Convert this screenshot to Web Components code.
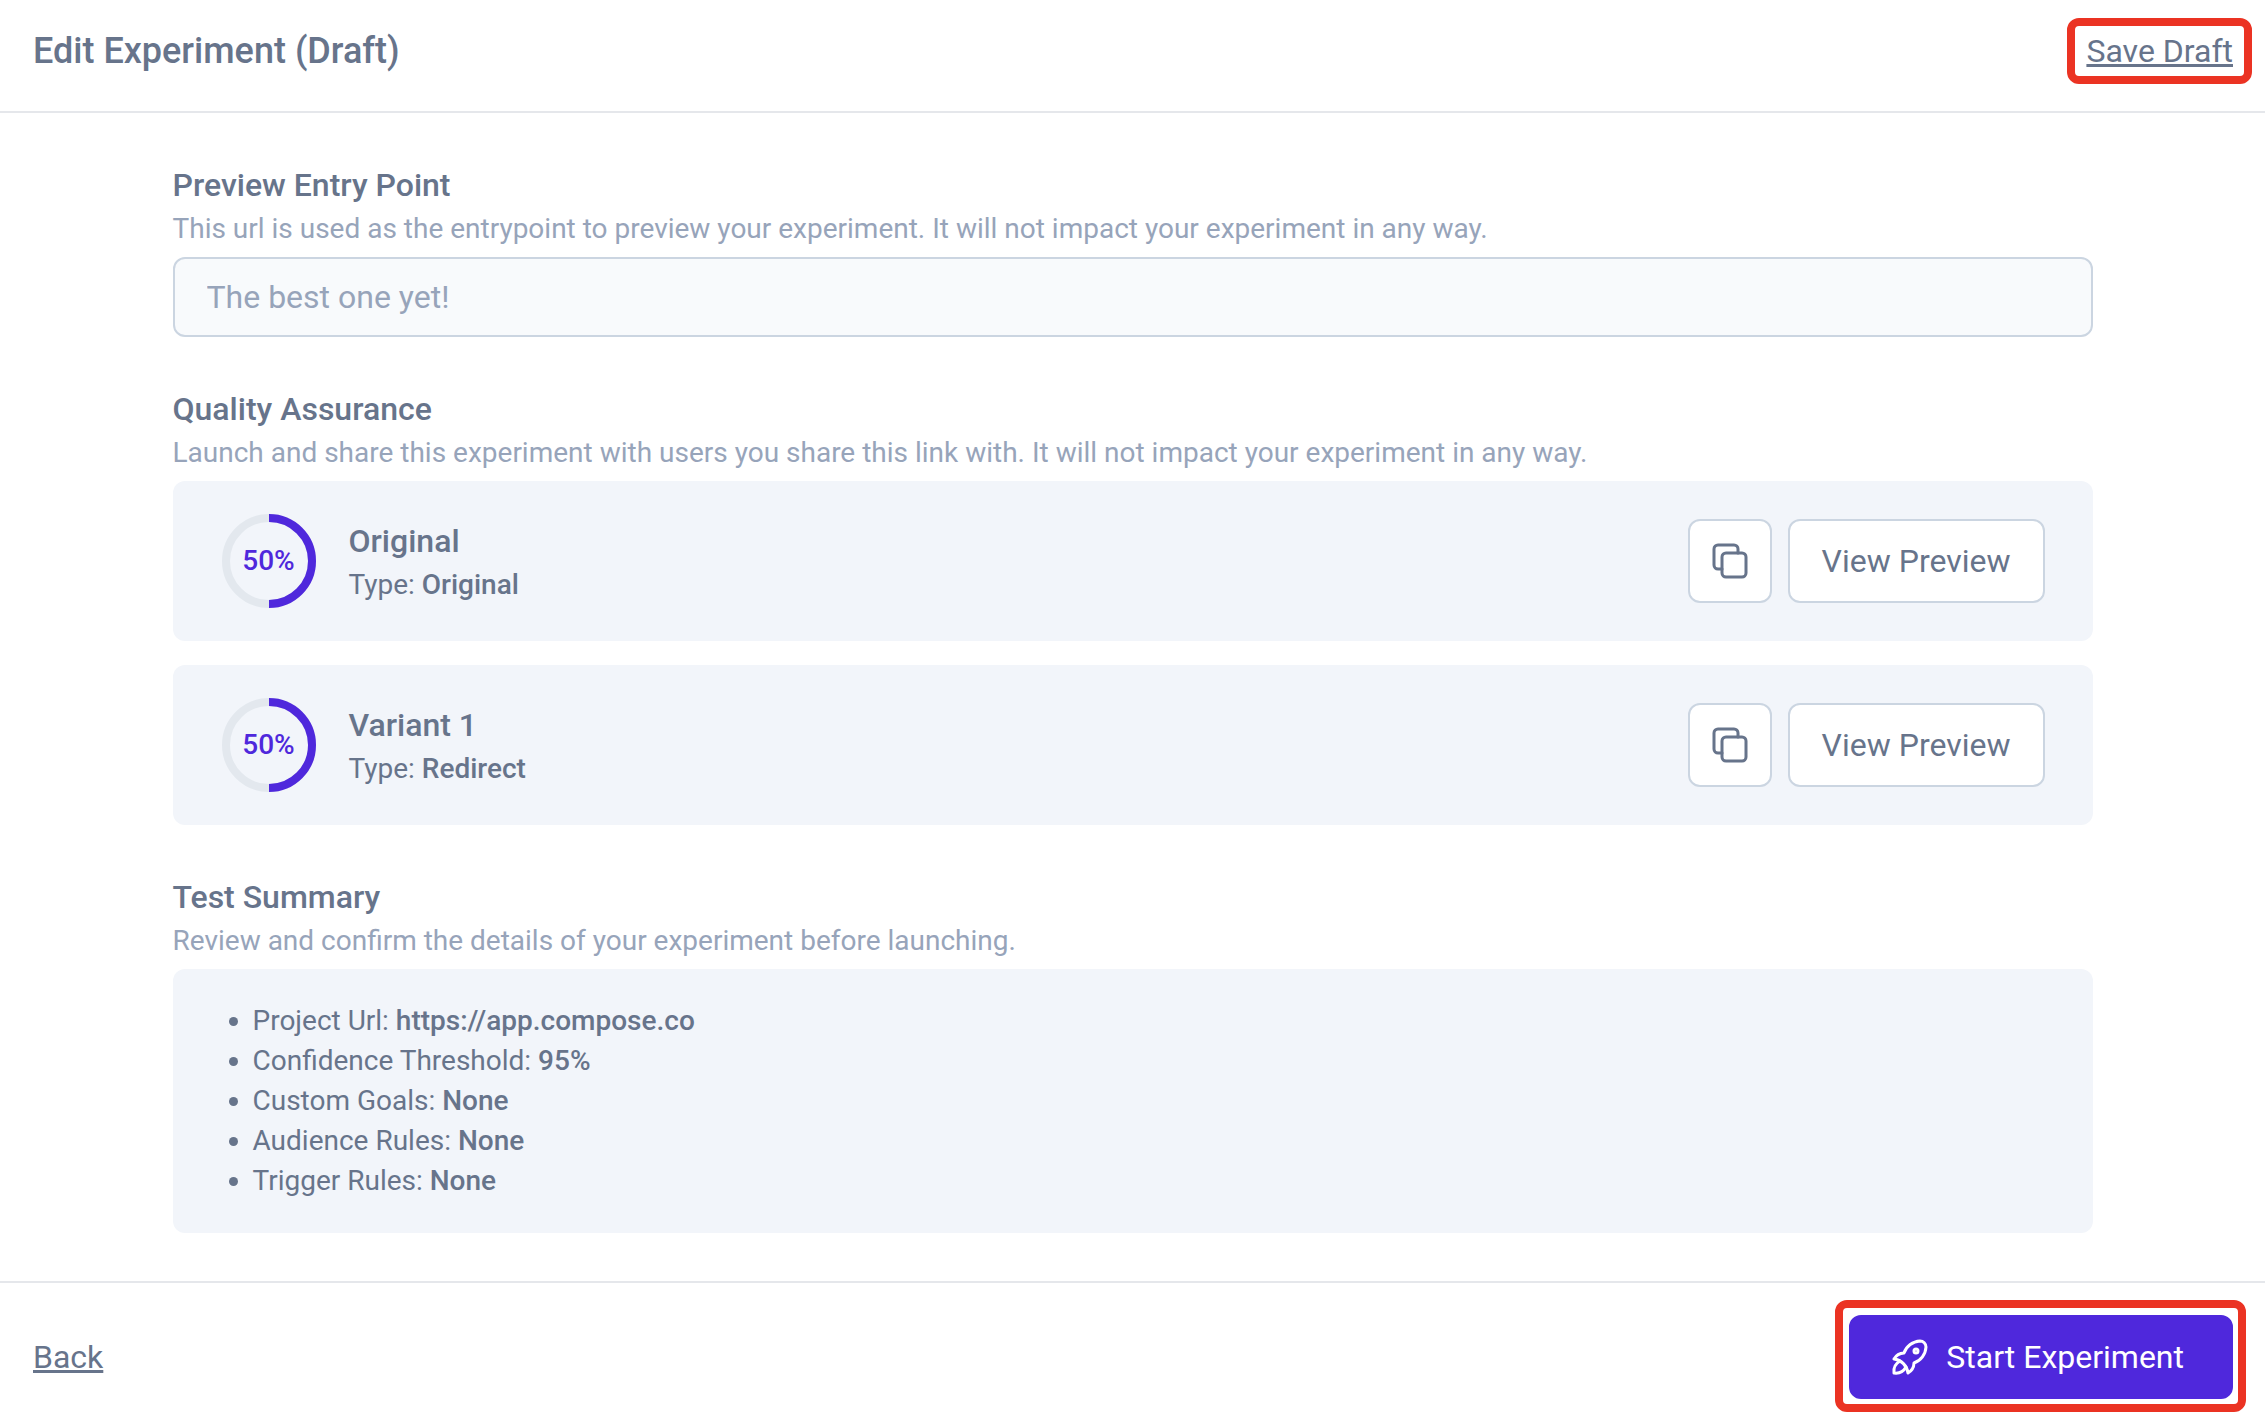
<!DOCTYPE html>
<html lang="en">
<head>
  <meta charset="utf-8">
  <meta name="viewport" content="width=device-width, initial-scale=1">
  <title>Edit Experiment</title>
  <style>
    :root {
      --text: #67748b;
      --muted: #97a4ba;
      --panel: #f2f5fa;
      --border: #cbd5e1;
      --line: #e5e7eb;
      --primary: #4f28dc;
      --callout: #eb3323;
      --radius: 12px;
    }

    body {
      margin: 0;
      background: #fff;
      color: var(--text);
      font-family: Roboto, "Liberation Sans", sans-serif;
      font-size: 32px;
      line-height: 48px;
    }
  </style>
</head>
<body>
  <experiment-editor></experiment-editor>

  <script>
    const ICONS = {
      copy: `
        <rect x="8" y="8" width="12" height="12" rx="2" />
        <path d="M16 8v-2a2 2 0 0 0 -2 -2h-8a2 2 0 0 0 -2 2v8a2 2 0 0 0 2 2h2" />`,
      rocket: `
        <path d="M4 13a8 8 0 0 1 7 7a6 6 0 0 0 3 -5a9 9 0 0 0 6 -8a3 3 0 0 0 -3 -3a9 9 0 0 0 -8 6a6 6 0 0 0 -5 3" />
        <path d="M7 14a6 6 0 0 0 -3 6a6 6 0 0 0 6 -3" />
        <circle cx="15" cy="9" r="1" />`,
    };

    class AppIcon extends HTMLElement {
      constructor() {
        super();
        this.attachShadow({ mode: "open" });
      }

      connectedCallback() {
        this.shadowRoot.innerHTML = `
          <style>
            :host {
              display: block;
              width: 48px;
              height: 48px;
            }

            svg {
              display: block;
              width: 100%;
              height: 100%;
              fill: none;
              stroke: currentColor;
              stroke-width: 1.5;
              stroke-linecap: round;
              stroke-linejoin: round;
            }
          </style>
          <svg viewBox="0 0 24 24" aria-hidden="true">${ICONS[this.getAttribute("name")]}</svg>
        `;
      }
    }

    // Draws a red frame over whatever is slotted in
    class CalloutFrame extends HTMLElement {
      constructor() {
        super();
        this.attachShadow({ mode: "open" });
        this.shadowRoot.innerHTML = `
          <style>
            :host {
              display: block;
              position: relative;
            }

            :host::after {
              content: "";
              position: absolute;
              inset: var(--frame-inset, -14px);
              border: 8px solid var(--callout);
              border-radius: var(--radius);
              pointer-events: none;
            }
          </style>
          <slot></slot>
        `;
      }
    }

    class TextLink extends HTMLElement {
      constructor() {
        super();
        this.attachShadow({ mode: "open" });
      }

      connectedCallback() {
        this.shadowRoot.innerHTML = `
          <style>
            :host {
              display: block;
            }

            a {
              display: block;
              color: inherit;
              text-decoration: underline;
              text-decoration-thickness: 3px;
              text-decoration-skip-ink: none;
              text-underline-offset: 2px;
            }
          </style>
          <a href="${this.getAttribute("href") || "#"}"><slot></slot></a>
        `;
      }
    }

    class AppButton extends HTMLElement {
      constructor() {
        super();
        this.attachShadow({ mode: "open" });
      }

      connectedCallback() {
        const icon = this.getAttribute("icon");
        const label = this.getAttribute("label");

        this.shadowRoot.innerHTML = `
          <style>
            :host {
              display: block;
            }

            button {
              display: flex;
              align-items: center;
              justify-content: center;
              gap: 12px;
              box-sizing: border-box;
              height: 84px;
              margin: 0;
              padding: 0 32px;
              border: 2px solid var(--border);
              border-radius: var(--radius);
              background: #fff;
              color: inherit;
              font: inherit;
              white-space: nowrap;
              cursor: pointer;
            }

            :host([square]) button {
              width: 84px;
              padding: 0;
            }

            :host([primary]) button {
              padding: 0 47px 0 35px;
              border-color: var(--primary);
              background: var(--primary);
              color: #fff;
            }
          </style>
          <button type="button" ${label ? `aria-label="${label}"` : ""}>
            ${icon ? `<app-icon name="${icon}"></app-icon>` : ""}
            <slot></slot>
          </button>
        `;
      }
    }

    class EditorHeader extends HTMLElement {
      constructor() {
        super();
        this.attachShadow({ mode: "open" });
        this.shadowRoot.innerHTML = `
          <style>
            :host {
              display: block;
            }

            header {
              display: flex;
              align-items: center;
              justify-content: space-between;
              padding: 23px 32px 32px 33px;
              border-bottom: 2px solid var(--line);
            }

            h1 {
              margin: 0;
              font-size: 36px;
              line-height: 56px;
              font-weight: 500;
            }
          </style>
          <header>
            <h1><slot></slot></h1>
            <slot name="action"></slot>
          </header>
        `;
      }
    }

    class EditorFooter extends HTMLElement {
      constructor() {
        super();
        this.attachShadow({ mode: "open" });
        this.shadowRoot.innerHTML = `
          <style>
            :host {
              display: block;
            }

            footer {
              display: flex;
              align-items: center;
              justify-content: space-between;
              padding: 32px 32px 24px 33px;
              border-top: 2px solid var(--line);
            }
          </style>
          <footer><slot></slot></footer>
        `;
      }
    }

    const SECTION_STYLES = `
      :host {
        display: block;
      }

      h2 {
        margin: 0;
        font-size: 32px;
        line-height: 48px;
        font-weight: 500;
      }

      p {
        margin: 0 0 8px;
        color: var(--muted);
        font-size: 28px;
        line-height: 40px;
      }
    `;

    class EditorSection extends HTMLElement {
      constructor() {
        super();
        this.attachShadow({ mode: "open" });
      }

      connectedCallback() {
        this.shadowRoot.innerHTML = `
          <style>
            ${SECTION_STYLES}

            .content {
              display: grid;
              gap: 24px;
            }
          </style>
          <section>
            <h2>${this.getAttribute("heading")}</h2>
            <p>${this.getAttribute("description")}</p>
            <div class="content"><slot></slot></div>
          </section>
        `;
      }
    }

    class EntryPointField extends HTMLElement {
      constructor() {
        super();
        this.attachShadow({ mode: "open" });
      }

      connectedCallback() {
        this.shadowRoot.innerHTML = `
          <style>
            ${SECTION_STYLES}

            label {
              display: block;
            }

            input {
              display: block;
              box-sizing: border-box;
              width: 100%;
              height: 80px;
              padding: 0 32px;
              border: 2px solid var(--border);
              border-radius: var(--radius);
              background: #f8fafc;
              color: var(--text);
              font: inherit;
            }

            input::placeholder {
              color: var(--muted);
              opacity: 1;
            }
          </style>
          <section>
            <h2><label for="entry">${this.getAttribute("heading")}</label></h2>
            <p id="hint">${this.getAttribute("description")}</p>
            <input id="entry" type="text" aria-describedby="hint" placeholder="${this.getAttribute("placeholder")}">
          </section>
        `;
      }
    }

    class ProgressRing extends HTMLElement {
      constructor() {
        super();
        this.attachShadow({ mode: "open" });
      }

      connectedCallback() {
        const value = Number(this.getAttribute("value"));

        this.shadowRoot.innerHTML = `
          <style>
            :host {
              display: grid;
              place-items: center;
              width: 96px;
              height: 96px;
              color: var(--primary);
              font-size: 28px;
              line-height: 40px;
              font-weight: 500;
            }

            svg,
            span {
              grid-area: 1 / 1;
            }

            circle {
              fill: none;
              stroke: #e3e8ee;
              stroke-width: 8;
            }

            .value {
              stroke: var(--primary);
            }
          </style>
          <svg width="96" height="96" viewBox="0 0 96 96" aria-hidden="true">
            <circle cx="48" cy="48" r="43" />
            <circle class="value" cx="48" cy="48" r="43" pathLength="100"
              stroke-dasharray="${value} ${100 - value}" transform="rotate(-90 48 48)" />
          </svg>
          <span>${value}%</span>
        `;
      }
    }

    class VariantCard extends HTMLElement {
      constructor() {
        super();
        this.attachShadow({ mode: "open" });
      }

      connectedCallback() {
        this.shadowRoot.innerHTML = `
          <style>
            :host {
              display: flex;
              align-items: center;
              gap: 32px;
              padding: 32px 48px;
              border-radius: var(--radius);
              background: var(--panel);
            }

            .info {
              flex: 1;
            }

            h3 {
              margin: 0;
              font-size: 32px;
              line-height: 48px;
              font-weight: 500;
            }

            p {
              margin: 0;
              font-size: 28px;
              line-height: 40px;
            }

            strong {
              font-weight: 500;
            }

            .actions {
              display: flex;
              gap: 16px;
            }
          </style>
          <progress-ring value="${this.getAttribute("traffic")}"></progress-ring>
          <div class="info">
            <h3>${this.getAttribute("name")}</h3>
            <p>Type: <strong>${this.getAttribute("type")}</strong></p>
          </div>
          <div class="actions">
            <app-button square icon="copy" label="Copy preview link"></app-button>
            <app-button>View Preview</app-button>
          </div>
        `;
      }
    }

    class TestSummary extends HTMLElement {
      constructor() {
        super();
        this.attachShadow({ mode: "open" });
        this._items = [
          ["Project Url", "https://app.compose.co"],
          ["Confidence Threshold", "95%"],
          ["Custom Goals", "None"],
          ["Audience Rules", "None"],
          ["Trigger Rules", "None"],
        ];
      }

      connectedCallback() {
        this.shadowRoot.innerHTML = `
          <style>
            :host {
              display: block;
              padding: 32px;
              border-radius: var(--radius);
              background: var(--panel);
              font-size: 28px;
              line-height: 40px;
            }

            ul {
              margin: 0;
              padding: 0 0 0 48px;
            }

            strong {
              font-weight: 500;
            }
          </style>
          <ul>
            ${this._items
              .map(([name, value]) => `<li>${name}: <strong>${value}</strong></li>`)
              .join("")}
          </ul>
        `;
      }
    }

    class ExperimentEditor extends HTMLElement {
      constructor() {
        super();
        this.attachShadow({ mode: "open" });
      }

      connectedCallback() {
        this.shadowRoot.innerHTML = `
          <style>
            :host {
              display: block;
            }

            main {
              display: grid;
              gap: 48px;
              width: calc(100% - 64px);
              max-width: 1920px;
              margin: 0 auto;
              padding: 48px 0;
            }

            .save {
              --frame-inset: -9px -19px;
            }

            .start {
              --frame-inset: -15px -13px -13px -14px;
            }
          </style>
          <editor-header>
            Edit Experiment (Draft)
            <callout-frame class="save" slot="action">
              <text-link>Save Draft</text-link>
            </callout-frame>
          </editor-header>
          <main>
            <entry-point-field
              heading="Preview Entry Point"
              description="This url is used as the entrypoint to preview your experiment. It will not impact your experiment in any way."
              placeholder="The best one yet!"></entry-point-field>
            <editor-section
              heading="Quality Assurance"
              description="Launch and share this experiment with users you share this link with. It will not impact your experiment in any way.">
              <variant-card name="Original" type="Original" traffic="50"></variant-card>
              <variant-card name="Variant 1" type="Redirect" traffic="50"></variant-card>
            </editor-section>
            <editor-section
              heading="Test Summary"
              description="Review and confirm the details of your experiment before launching.">
              <test-summary></test-summary>
            </editor-section>
          </main>
          <editor-footer>
            <text-link>Back</text-link>
            <callout-frame class="start">
              <app-button primary icon="rocket">Start Experiment</app-button>
            </callout-frame>
          </editor-footer>
        `;
      }
    }

    customElements.define("app-icon", AppIcon);
    customElements.define("callout-frame", CalloutFrame);
    customElements.define("text-link", TextLink);
    customElements.define("app-button", AppButton);
    customElements.define("editor-header", EditorHeader);
    customElements.define("editor-footer", EditorFooter);
    customElements.define("editor-section", EditorSection);
    customElements.define("entry-point-field", EntryPointField);
    customElements.define("progress-ring", ProgressRing);
    customElements.define("variant-card", VariantCard);
    customElements.define("test-summary", TestSummary);
    customElements.define("experiment-editor", ExperimentEditor);
  </script>
</body>
</html>
